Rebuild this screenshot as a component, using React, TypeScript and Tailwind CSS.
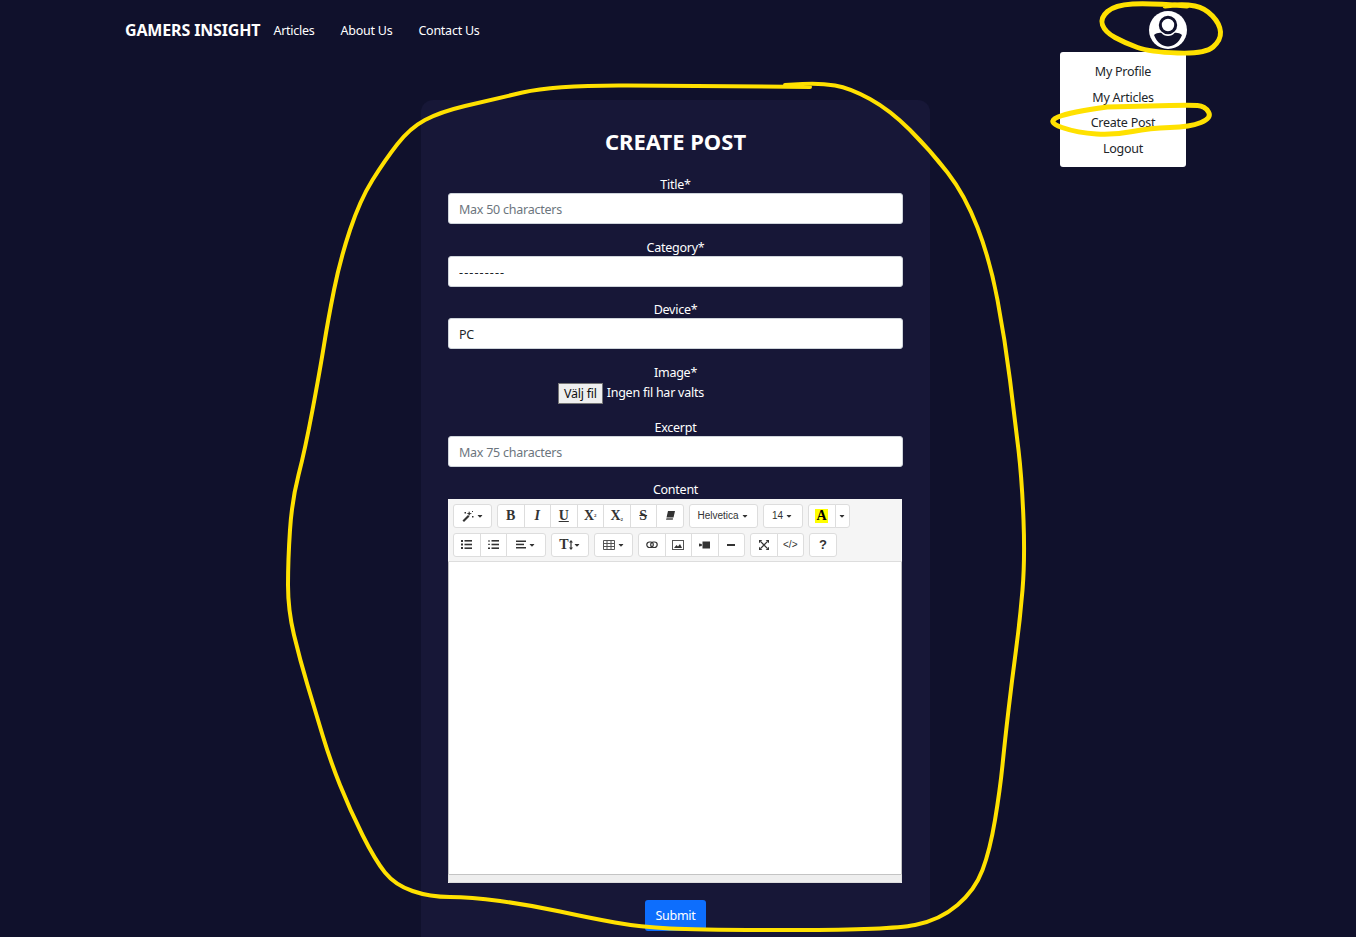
import React from "react";
import { FaCaretDown } from "react-icons/fa";

const Caret = () => <FaCaretDown className="text-[8px] ml-[2px] text-[#333]" />;

const Tool: React.FC<{ w?: string; className?: string; children: React.ReactNode }> = ({
  w = "w-[27.5px]",
  className = "",
  children,
}) => (
  <div
    className={`${w} h-full flex items-center justify-center bg-white border border-[#dddddd] -ml-px first:ml-0 first:rounded-l-[3px] last:rounded-r-[3px] text-[#333] ${className}`}
  >
    {children}
  </div>
);

const Group: React.FC<{ children: React.ReactNode }> = ({ children }) => (
  <div className="flex h-full">{children}</div>
);

const serif = "font-['Liberation_Serif',serif] font-bold text-[14px] leading-none tracking-normal";
const helv = "font-['Liberation_Sans',sans-serif] text-[10px] leading-none tracking-normal";

const Icon: React.FC<{ w?: number; h?: number; children: React.ReactNode }> = ({ w = 12, h = 12, children }) => (
  <svg viewBox={`0 0 ${w} ${h}`} width={w} height={h} fill="#333" className="shrink-0">
    {children}
  </svg>
);

const TextField: React.FC<{ label: string; placeholder?: string; value?: string; inputClass?: string }> = ({
  label,
  placeholder,
  value,
  inputClass = "",
}) => (
  <div className="mb-[11.5px]">
    <label className="block h-[20px] text-center text-white leading-[24px]">{label}</label>
    <input
      readOnly
      placeholder={placeholder}
      value={value}
      className={`block w-full h-[31px] px-[10px] pt-[2px] bg-white border border-[#ced4da] rounded-[3px] text-[#212529] placeholder:text-[#6c757d] outline-none ${inputClass}`}
    />
  </div>
);

const smooth = (pts: number[][]) => {
  let d = `M${pts[0][0]} ${pts[0][1]}`;
  for (let i = 1; i < pts.length - 1; i++) {
    const mx = (pts[i][0] + pts[i + 1][0]) / 2;
    const my = (pts[i][1] + pts[i + 1][1]) / 2;
    d += ` Q${pts[i][0]} ${pts[i][1]} ${mx} ${my}`;
  }
  const last = pts[pts.length - 1];
  return `${d} L${last[0]} ${last[1]}`;
};

const bigLoop = [
  [810, 87], [700, 86], [555, 85], [490, 100], [440, 112], [410, 128], [385, 160], [360, 200],
  [340, 260], [328, 320], [320, 370], [305, 450], [292, 500], [288, 560], [288, 610], [300, 660],
  [315, 710], [330, 760], [350, 810], [375, 860], [395, 885], [430, 897], [470, 897], [530, 905],
  [590, 918], [640, 927], [700, 930], [890, 930], [940, 920], [975, 890], [990, 850], [1000, 790],
  [1005, 740], [1012, 680], [1020, 620], [1025, 560], [1022, 480], [1015, 420], [1005, 340],
  [990, 260], [965, 195], [930, 150], [890, 110], [850, 88], [820, 83], [785, 85],
];
const avatarLoop = [
  [1187, 6], [1150, 3], [1115, 5], [1100, 18], [1105, 32], [1125, 43], [1150, 52], [1205, 54],
  [1221, 40], [1220, 24], [1205, 8], [1185, 4], [1165, 6],
];
const postLoop = [
  [1107, 107], [1070, 112], [1046, 122], [1078, 133], [1115, 135], [1150, 128], [1190, 127],
  [1212, 118], [1205, 106], [1190, 105], [1150, 106], [1107, 107],
];

export default function App() {
  return (
    <div className="relative h-[937px] overflow-hidden bg-[#10112c] font-['Noto_Sans',sans-serif] text-[12.5px] tracking-[-0.25px]">
      <nav className="h-[60px] pl-[125px] flex items-center text-white">
        <span className="text-[16px] font-bold mr-[13px] tracking-[-0.15px]">GAMERS INSIGHT</span>
        <div className="flex gap-[26px] pt-[2px]">
          <span>Articles</span>
          <span>About Us</span>
          <span>Contact Us</span>
        </div>
      </nav>

      {/* avatar + open dropdown */}
      <svg viewBox="0 0 38 38" className="absolute left-[1149px] top-[11px] w-[38px] h-[38px]">
        <circle cx="19" cy="19" r="19" fill="#ffffff" />
        <circle cx="19" cy="14" r="7.7" fill="none" stroke="#10112c" strokeWidth="3" />
        <path d="M5 24 C7 22 11 21.5 12.5 22 C15 26 23 26 25.5 22 C27 21.5 31 22 33 24 C30 32 24 35.5 19 35.5 C14 35.5 8 32 5 24Z" fill="#10112c" />
      </svg>
      <div className="absolute left-[1060px] top-[52px] w-[126px] h-[115px] bg-white rounded-[3px] flex flex-col items-center pt-[7px] text-[#212529]">
        <span className="h-[25.6px] leading-[25px]">My Profile</span>
        <span className="h-[25.6px] leading-[25px]">My Articles</span>
        <span className="h-[25.6px] leading-[25px]">Create Post</span>
        <span className="h-[25.6px] leading-[25px]">Logout</span>
      </div>

      <main className="w-[509px] ml-[421px] mt-[40px] pt-[27px] px-[27px] h-[860px] bg-[#171737] rounded-[12px]">
        <h1 className="h-[46px] text-center text-white text-[22px] font-bold leading-[28px] tracking-normal">CREATE POST</h1>
        <TextField label="Title*" placeholder="Max 50 characters" />
        <TextField label="Category*" value="---------" inputClass="tracking-[1.1px]" />
        <TextField label="Device*" value="PC" />

        <div className="mb-[11.5px] h-[44px]">
          <label className="block h-[20px] text-center text-white leading-[24px]">Image*</label>
          <div className="flex items-center h-[21px] mt-[2px] ml-[110px] text-white">
            <span className="h-[21px] px-[5px] bg-[#efefef] border border-[#767676] text-[#111] leading-[20px]">Välj fil</span>
            <span className="ml-[4px]">Ingen fil har valts</span>
          </div>
        </div>

        <TextField label="Excerpt" placeholder="Max 75 characters" />

        <label className="block h-[20px] text-center text-white leading-[22px]">Content</label>
        <section className="w-[454px] h-[384px] flex flex-col bg-white">
          <div className="h-[63px] flex flex-col bg-[#f5f5f5] border-b border-[#dddddd] pt-[5px] pl-[5px] gap-[5px]">
            <div className="h-[24px] flex gap-[5px]">
              <Group>
                <Tool w="w-[39px]">
                  <Icon>
                    <path d="M0.5 10.5 L6 5 L7.5 6.5 L2 12Z" />
                    <path d="M7 1 L8 3 L10 3.5 L8 4.3 L7 6 L6.5 4.3 L4.5 3.5 L6.5 3Z" />
                    <rect x="10" y="6" width="1.5" height="1.5" />
                    <rect x="2.5" y="2" width="1.5" height="1.5" />
                    <rect x="10" y="1" width="1" height="1" />
                  </Icon>
                  <Caret />
                </Tool>
              </Group>
              <Group>
                <Tool><span className={serif}>B</span></Tool>
                <Tool><span className={`${serif} italic`}>I</span></Tool>
                <Tool><span className={`${serif} underline`}>U</span></Tool>
                <Tool><span className={serif}>X<sup className="text-[5px]">2</sup></span></Tool>
                <Tool><span className={serif}>X<sub className="text-[5px]">2</sub></span></Tool>
                <Tool><span className={`${serif} line-through`}>S</span></Tool>
                <Tool>
                  <Icon w={10} h={9}>
                    <path d="M3 0 H10 L8.5 6.5 H1.5Z" />
                    <path d="M1.5 7 H8 L7.8 9 H1Z" fill="#777" />
                  </Icon>
                </Tool>
              </Group>
              <Group>
                <Tool w="w-[69px]"><span className={helv}>Helvetica</span><Caret /></Tool>
              </Group>
              <Group>
                <Tool w="w-[40px]"><span className={helv}>14</span><Caret /></Tool>
              </Group>
              <Group>
                <Tool w="w-[28px]"><span className={`${serif} bg-[#ffff00] px-[1px] text-black`}>A</span></Tool>
                <Tool w="w-[15px]"><FaCaretDown className="text-[8px]" /></Tool>
              </Group>
            </div>
            <div className="h-[24px] flex gap-[5px]">
              <Group>
                <Tool>
                  <Icon w={11} h={9}>
                    <rect x="0" y="0" width="2" height="2" /><rect x="3.5" y="0" width="7.5" height="1.6" />
                    <rect x="0" y="3.5" width="2" height="2" /><rect x="3.5" y="3.7" width="7.5" height="1.6" />
                    <rect x="0" y="7" width="2" height="2" /><rect x="3.5" y="7.4" width="7.5" height="1.6" />
                  </Icon>
                </Tool>
                <Tool>
                  <Icon w={11} h={9}>
                    <rect x="0.5" y="0" width="1" height="2" /><rect x="3.5" y="0" width="7.5" height="1.6" />
                    <rect x="0" y="3.8" width="2" height="1" /><rect x="3.5" y="3.7" width="7.5" height="1.6" />
                    <rect x="0" y="7.5" width="2" height="1.5" /><rect x="3.5" y="7.4" width="7.5" height="1.6" />
                  </Icon>
                </Tool>
                <Tool w="w-[40px]">
                  <Icon w={10} h={9}>
                    <rect x="0" y="0.5" width="10" height="1.5" />
                    <rect x="0" y="3.7" width="8" height="1.5" />
                    <rect x="0" y="7" width="10" height="1.5" />
                  </Icon>
                  <Caret />
                </Tool>
              </Group>
              <Group>
                <Tool w="w-[38px]">
                  <span className={serif}>T</span>
                  <Icon w={4} h={10}>
                    <path d="M2 0 L4 2.5 H2.6 V7.5 H4 L2 10 L0 7.5 H1.4 V2.5 H0Z" />
                  </Icon>
                  <FaCaretDown className="text-[8px]" />
                </Tool>
              </Group>
              <Group>
                <Tool w="w-[39px]">
                  <Icon w={12} h={10}>
                    <path d="M0.5 0.5 H11.5 V9.5 H0.5Z M0.5 3.5 H11.5 M0.5 6.5 H11.5 M4 0.5 V9.5 M8 0.5 V9.5" fill="none" stroke="#555" />
                  </Icon>
                  <Caret />
                </Tool>
              </Group>
              <Group>
                <Tool>
                  <Icon w={12} h={8}>
                    <rect x="0.8" y="1" width="6.5" height="5.5" rx="2.7" fill="none" stroke="#333" strokeWidth="1.2" />
                    <rect x="4.7" y="1" width="6.5" height="5.5" rx="2.7" fill="none" stroke="#333" strokeWidth="1.2" />
                  </Icon>
                </Tool>
                <Tool>
                  <Icon w={12} h={10}>
                    <rect x="0.5" y="0.5" width="11" height="9" fill="none" stroke="#555" />
                    <path d="M2 8 L4.5 5 L6 6.5 L8 4 L10 8Z" />
                  </Icon>
                </Tool>
                <Tool>
                  <Icon w={11} h={8}>
                    <rect x="3.5" y="0.5" width="7.5" height="7" />
                    <path d="M0 2.5 L2.8 3 V5 L0 5.5Z" />
                  </Icon>
                </Tool>
                <Tool>
                  <Icon w={8} h={2}><rect width="8" height="2" /></Icon>
                </Tool>
              </Group>
              <Group>
                <Tool>
                  <svg viewBox="0 0 12 12" className="w-[10px] h-[10px]" stroke="#333" strokeWidth="1.5" fill="#333">
                    <path d="M2 2 L10 10 M10 2 L2 10" />
                    <path d="M0 0 H4 L0 4Z M12 0 H8 L12 4Z M0 12 H4 L0 8Z M12 12 H8 L12 8Z" stroke="none" />
                  </svg>
                </Tool>
                <Tool><span className={helv}>&lt;/&gt;</span></Tool>
              </Group>
              <Group>
                <Tool><span className="font-['Liberation_Sans',sans-serif] font-bold text-[13px] leading-none">?</span></Tool>
              </Group>
            </div>
          </div>
          <div className="flex-1 border-x border-[#c4c4c4]" />
          <div className="h-[9px] bg-[#eeeeee] border border-t-[#c4c4c4] border-[#dddddd] rounded-b-[2px]" />
        </section>

        <div className="flex justify-center mt-[17px]">
          <button className="h-[31px] px-[10px] pt-[2px] bg-[#0d6efd] text-white rounded-[3px]">Submit</button>
        </div>
      </main>

      {/* marker scribbles drawn over the screenshot */}
      <svg className="absolute inset-0 w-full h-full pointer-events-none" viewBox="0 0 1356 937" fill="none" stroke="#ffe100" strokeLinecap="round" strokeLinejoin="round">
        <path d={smooth(bigLoop)} strokeWidth="4" />
        <path d={smooth(avatarLoop)} strokeWidth="5" />
        <path d={smooth(postLoop)} strokeWidth="5" />
      </svg>
    </div>
  );
}
